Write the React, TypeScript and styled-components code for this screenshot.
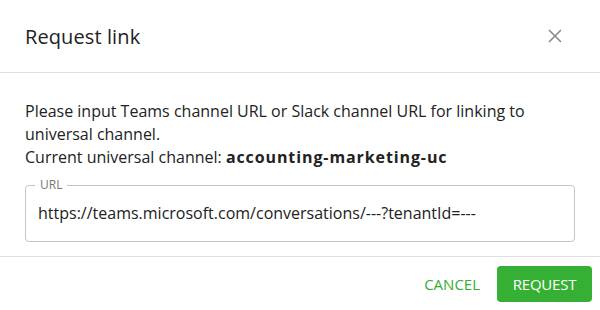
import React from "react";
import styled, { createGlobalStyle } from "styled-components";

const Global = createGlobalStyle`
  html, body { margin: 0; padding: 0; background: #ffffff; }
  body { font-family: "Open Sans", "Noto Sans", "Liberation Sans", sans-serif; color: #222; }
  * { box-sizing: border-box; }
`;

const Dialog = styled.div`
  width: 600px;
  height: 310px;
  background: #fff;
  border-radius: 4px;
  display: flex;
  flex-direction: column;
`;

const Header = styled.div`
  height: 73px;
  padding: 0 25px;
  display: flex;
  align-items: center;
  justify-content: space-between;
  border-bottom: 1px solid #e0e0e0;
`;

const Title = styled.h2`
  margin: 0;
  font-size: 20px;
  font-weight: 500;
  color: #222;
  letter-spacing: 0.1px;
`;

const CloseButton = styled.button`
  border: none;
  background: none;
  padding: 0;
  width: 24px;
  height: 24px;
  margin-right: 8px;
  display: flex;
  align-items: center;
  justify-content: center;
  cursor: pointer;
`;

const Body = styled.div`
  padding: 27px 25px 0;
  height: 184px;
  border-bottom: 1px solid #e0e0e0;
`;

const Description = styled.p`
  margin: 0;
  font-size: 16px;
  line-height: 23px;
  color: #222;
`;

const Strong = styled.strong`
  font-weight: 700;
  letter-spacing: 0.9px;
`;

const Field = styled.fieldset`
  margin: 10px 0 0;
  padding: 0 12px;
  height: 63px;
  border: 1px solid #c4c4c4;
  border-radius: 4px;
  display: flex;
  align-items: center;
`;

const Legend = styled.legend`
  padding: 0 5px;
  margin-left: -3px;
  font-size: 12px;
  color: #777;
  line-height: 12px;
`;

const Input = styled.input`
  border: none;
  outline: none;
  width: 100%;
  font-family: inherit;
  font-size: 16px;
  color: #222;
  padding: 0;
  margin-top: -6px;
  background: transparent;
`;

const Footer = styled.div`
  flex: 1;
  padding: 0 8px 0 0;
  display: flex;
  align-items: center;
  justify-content: flex-end;
  gap: 17px;
`;

const TextButton = styled.button`
  border: none;
  background: none;
  font-family: inherit;
  font-size: 15px;
  font-weight: 500;
  color: #36ad33;
  letter-spacing: 0px;
  padding: 8px 0;
  cursor: pointer;
`;

const PrimaryButton = styled.button`
  border: none;
  background: #35b035;
  color: #fff;
  font-family: inherit;
  font-size: 15px;
  font-weight: 500;
  letter-spacing: -0.2px;
  height: 36px;
  width: 95px;
  border-radius: 4px;
  cursor: pointer;
`;

export default function App() {
  return (
    <>
      <Global />
      <Dialog>
        <Header>
          <Title>Request link</Title>
          <CloseButton aria-label="close">
            <svg width="14" height="14" viewBox="0 0 14 14">
              <path d="M1 1 L13 13 M13 1 L1 13" stroke="#8a8a8a" strokeWidth="1.6" />
            </svg>
          </CloseButton>
        </Header>
        <Body>
          <Description>
            Please input Teams channel URL or Slack channel URL for linking to universal channel.
            <br />
            Current universal channel: <Strong>accounting-marketing-uc</Strong>
          </Description>
          <Field>
            <Legend>URL</Legend>
            <Input defaultValue="https://teams.microsoft.com/conversations/---?tenantId=---" />
          </Field>
        </Body>
        <Footer>
          <TextButton>CANCEL</TextButton>
          <PrimaryButton>REQUEST</PrimaryButton>
        </Footer>
      </Dialog>
    </>
  );
}
